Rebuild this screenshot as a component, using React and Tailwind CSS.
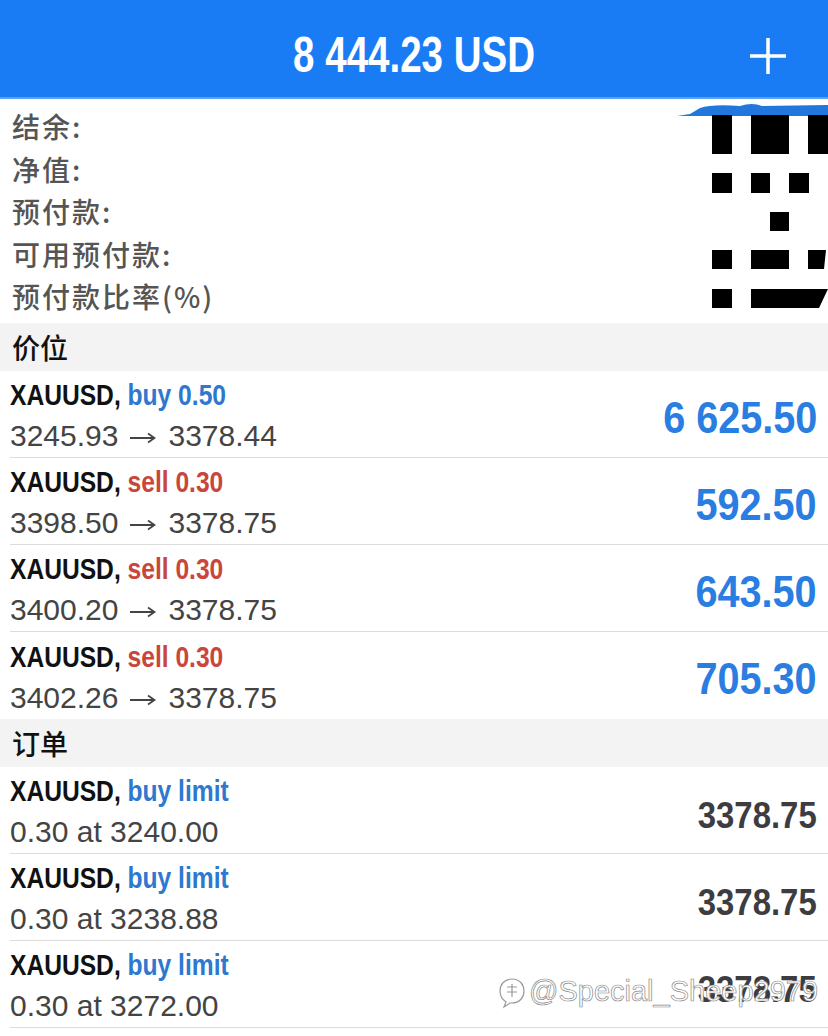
import React from "react";

const latin = { fontFamily: '"Liberation Sans", "Noto Sans CJK SC", sans-serif' };
const cjk = { fontFamily: '"Noto Sans CJK SC", sans-serif' };

function Section({ title }) {
  return (
    <div className="h-[48px] bg-[#f3f3f3] flex items-center pl-[12px] text-[28px] font-medium text-[#111]" style={cjk}>
      {title}
    </div>
  );
}

function Arrow() {
  return (
    <span className="inline-flex w-[50px] justify-center items-center align-middle">
      <svg width="26" height="12" viewBox="0 0 26 12">
        <path d="M0 6 H24 M18 1.5 L24.5 6 L18 10.5" fill="none" stroke="#444" strokeWidth="1.8" />
      </svg>
    </span>
  );
}

function Row({ side, sideColor, line2, value, valueClass, border = true }) {
  return (
    <div className={`ml-[10px] pr-[11px] h-[87px] flex items-center justify-between ${border ? "border-b border-[#dcdcdc]" : ""}`}>
      <div className="flex flex-col">
        <div className="leading-[40px] whitespace-nowrap translate-y-[4px]">
          <span className="inline-block origin-left scale-x-[0.82] text-[30px] font-bold text-[#111]">
            XAUUSD, <span className={sideColor}>{side}</span>
          </span>
        </div>
        <div className="leading-[40px] text-[30px] text-[#444] whitespace-nowrap">{line2}</div>
      </div>
      <span className={`inline-block origin-right font-bold whitespace-nowrap ${valueClass}`}>{value}</span>
    </div>
  );
}

export default function App() {
  const labels = ["结余:", "净值:", "预付款:", "可用预付款:", "预付款比率(%)"];
  const pos = [
    { side: "buy 0.50", c: "text-[#2e78cf]", a: "3245.93", b: "3378.44", v: "6 625.50" },
    { side: "sell 0.30", c: "text-[#c8463c]", a: "3398.50", b: "3378.75", v: "592.50" },
    { side: "sell 0.30", c: "text-[#c8463c]", a: "3400.20", b: "3378.75", v: "643.50" },
    { side: "sell 0.30", c: "text-[#c8463c]", a: "3402.26", b: "3378.75", v: "705.30" },
  ];
  const orders = ["0.30 at 3240.00", "0.30 at 3238.88", "0.30 at 3272.00"];
  return (
    <div className="relative w-[828px] h-[1036px] overflow-hidden bg-white" style={latin}>
      {/* Header */}
      <div className="relative h-[99px] bg-[#1a7cf4] border-b-[2px] border-[#5aa2f5] flex items-center justify-center">
        <span className="inline-block origin-center scale-x-[0.77] translate-y-[6px] text-[50px] font-bold text-white leading-none whitespace-nowrap">
          8 444.23 USD
        </span>
        <svg className="absolute left-[750px] top-[38px]" width="36" height="36" viewBox="0 0 36 36">
          <path d="M18 0 V36 M0 18 H36" stroke="white" strokeWidth="3.5" />
        </svg>
      </div>

      {/* Account info */}
      <div className="pt-[6px] pb-[5px]">
        {labels.map((l) => (
          <div key={l} className="pl-[12px] h-[42.5px] leading-[42.5px] text-[28px] font-medium tracking-[2px] text-[#555]" style={cjk}>
            {l}
          </div>
        ))}
      </div>

      <Section title="价位" />
      {pos.map((p, i) => (
        <Row
          key={i}
          side={p.side}
          sideColor={p.c}
          line2={<>{p.a}<Arrow />{p.b}</>}
          value={p.v}
          valueClass="scale-x-[0.9] translate-y-[4px] text-[44px] text-[#2a7de1]"
          border={i < pos.length - 1}
        />
      ))}

      <Section title="订单" />
      {orders.map((o, i) => (
        <Row
          key={i}
          side="buy limit"
          sideColor="text-[#2e78cf]"
          line2={o}
          value="3378.75"
          valueClass="scale-x-[0.89] translate-y-[6px] text-[37px] text-[#3c3c41]"
        />
      ))}

      {/* Censor marks */}
      <svg className="absolute left-0 top-0 pointer-events-none" width="828" height="330" viewBox="0 0 828 330">
        <path d="M677 116 L690 114 L700 108 Q712 104 740 106 Q752 102 762 106 L828 105 L828 116 Z" fill="#2277dd" />
        <rect x="712" y="115" width="20" height="39" fill="#000" />
        <rect x="751" y="115" width="38" height="39" fill="#000" />
        <rect x="808" y="115" width="20" height="39" fill="#000" />
        <rect x="712" y="173" width="20" height="20" fill="#000" />
        <rect x="751" y="173" width="19" height="20" fill="#000" />
        <rect x="789" y="173" width="20" height="20" fill="#000" />
        <rect x="770" y="212" width="19" height="19" fill="#000" />
        <rect x="712" y="250" width="20" height="19" fill="#000" />
        <rect x="751" y="250" width="38" height="19" fill="#000" />
        <polygon points="808,250 826,250 824,269 808,269" fill="#000" />
        <rect x="712" y="289" width="20" height="19" fill="#000" />
        <polygon points="751,289 828,289 819,308 751,308" fill="#000" />
      </svg>

      {/* Watermark */}
      <div className="absolute left-[497px] top-[970px] flex items-center gap-[2px] pointer-events-none">
        <svg width="30" height="34" viewBox="0 0 30 34">
          <path d="M15 4 C7 4 3 10 3 16 C3 21 6 25 9 27 L7 32 L13 28 C14 28 15 28 15 28 C23 28 27 22 27 16 C27 10 23 4 15 4 Z" fill="none" stroke="#9a9a9a" strokeWidth="1.2" />
          <path d="M10 12 H20 M15 9 V22 M10 17 H20" fill="none" stroke="#9a9a9a" strokeWidth="1.2" />
        </svg>
        <span
          className="text-[29px] text-white whitespace-nowrap"
          style={{ WebkitTextStroke: "0.7px #8a8a8a", fontFamily: '"Liberation Sans", sans-serif' }}
        >
          @Special_Sheep2979
        </span>
      </div>
    </div>
  );
}
